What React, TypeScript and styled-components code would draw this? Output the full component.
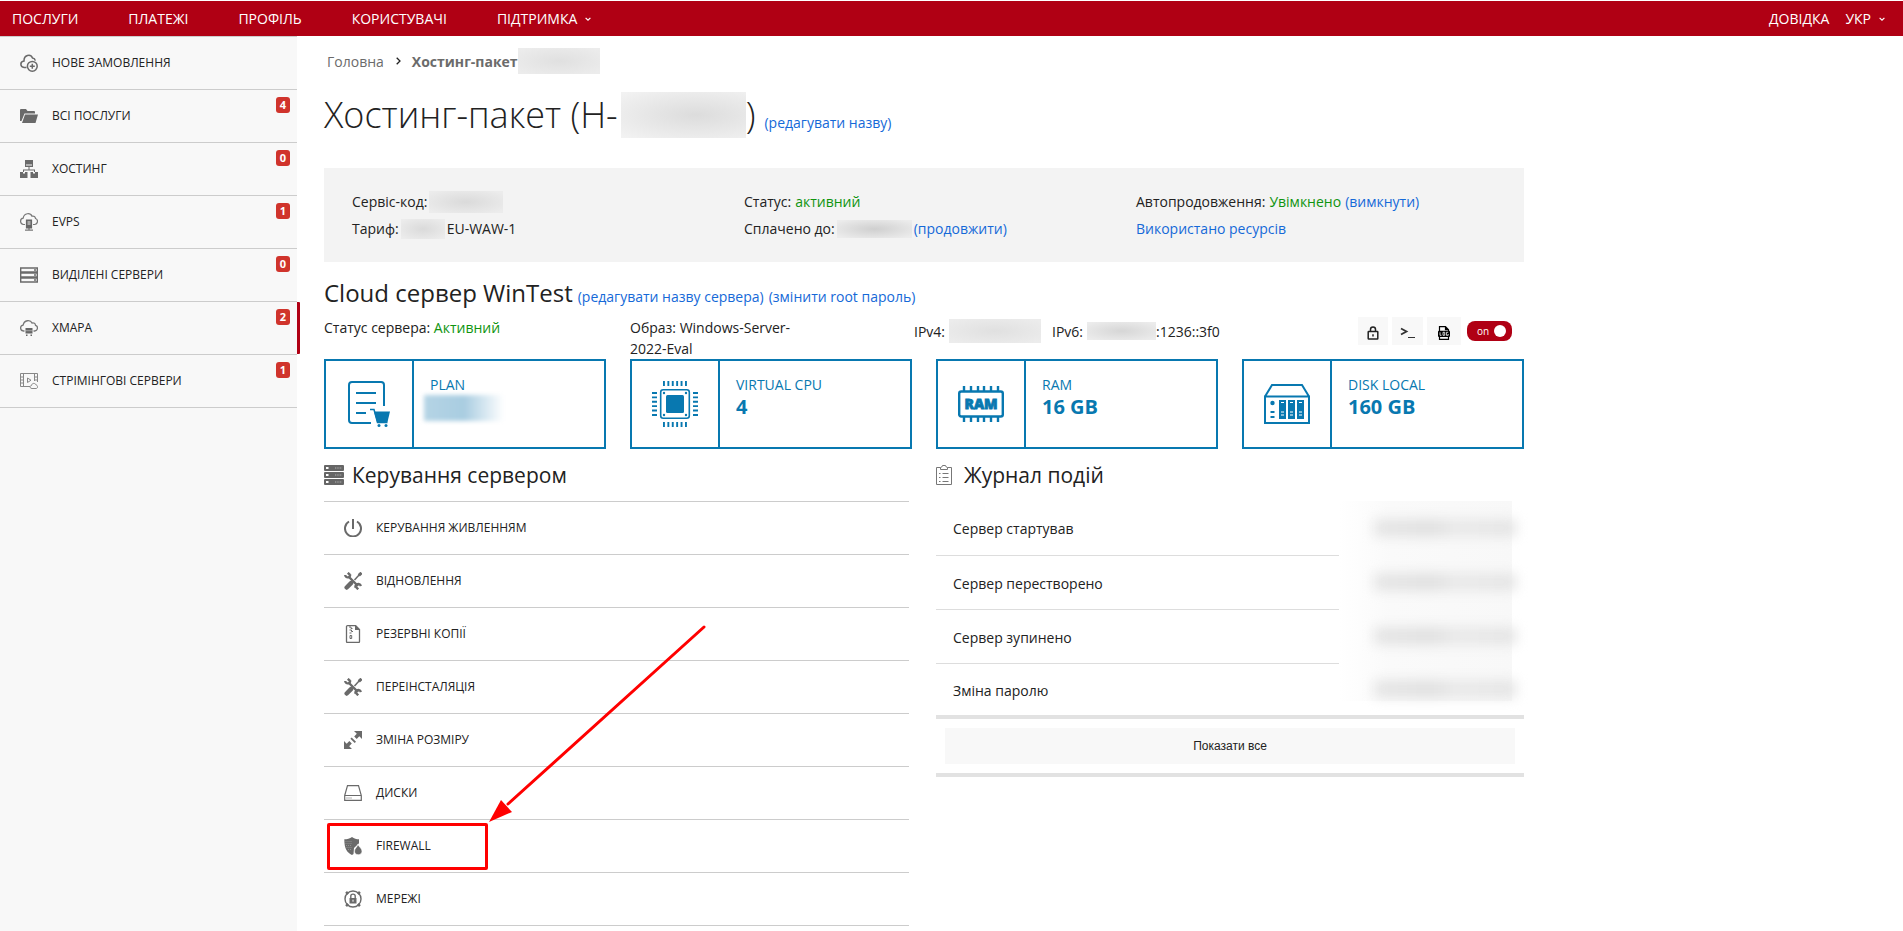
import React from "react";
import styled, { createGlobalStyle } from "styled-components";

const GlobalStyle = createGlobalStyle`
  * { box-sizing: border-box; }
  body {
    margin: 0;
    background: #fff;
    color: #222;
    font-family: "Open Sans", "Noto Sans", sans-serif;
    font-size: 14px;
    line-height: 21px;
  }
  a { text-decoration: none; }
  svg { display: block; flex: none; }
`;

const Page = styled.div`
  min-height: 100vh;
  display: flex;
  flex-direction: column;
  overflow: hidden;
`;

const TopBar = styled.header`
  display: flex;
  justify-content: space-between;
  align-items: center;
  height: 35px;
  margin-top: 1px;
  padding: 0 18px 0 12px;
  background: #b00014;
`;

const TopNav = styled.nav<{ $gap: number }>`
  display: flex;
  gap: ${(p) => p.$gap}px;
`;

const TopLink = styled.a`
  color: #fff;
  white-space: nowrap;
`;

const TopMenu = styled.button`
  display: flex;
  align-items: center;
  gap: 8px;
  padding: 0;
  border: 0;
  background: none;
  color: #fff;
  font: inherit;
`;

const Body = styled.div`
  flex: 1;
  display: flex;
`;

const Sidebar = styled.nav`
  flex: none;
  width: 297px;
  background: #f8f8f8;
  border-top: 1px solid #ccc;
`;

const List = styled.ul`
  list-style: none;
  margin: 0;
  padding: 0;
`;

const SideItem = styled.li<{ $active?: boolean }>`
  position: relative;
  border-bottom: 1px solid #ccc;
  ${(p) =>
    p.$active &&
    `&::after {
      content: "";
      position: absolute;
      top: 0;
      right: -3px;
      bottom: 0;
      width: 3px;
      border-radius: 0 1px 1px 0;
      background: #b00014;
    }`}
`;

const MenuLink = styled.a<{ $gap: number }>`
  display: flex;
  align-items: center;
  gap: ${(p) => p.$gap}px;
  height: 52px;
  padding: 0 20px;
  color: #222;
  font-size: 12px;
  white-space: nowrap;
`;

const MenuLabel = styled.span`
  padding-bottom: 2px;
`;

const Badge = styled.span`
  position: absolute;
  top: 7px;
  right: 7px;
  width: 14px;
  height: 16px;
  border-radius: 3px;
  background: #d0342c;
  color: #fff;
  font-size: 11px;
  font-weight: 700;
  line-height: 16px;
  text-align: center;
`;

const Main = styled.main`
  flex: 1;
  min-width: 0;
  max-width: 1254px;
  padding: 14px 27px 5px;
`;

const Breadcrumb = styled.nav`
  display: flex;
  align-items: center;
  height: 22px;
  padding-left: 3px;
`;

const Crumb = styled.a`
  margin-right: 12px;
  color: #6b6b6b;
`;

const CurrentCrumb = styled.b`
  margin-left: 11px;
  color: #6b6b6b;
`;

const Redacted = styled.span<{ $w: number; $h: number; $tone?: string }>`
  flex: none;
  display: inline-block;
  vertical-align: middle;
  width: ${(p) => p.$w}px;
  height: ${(p) => p.$h}px;
  background: radial-gradient(ellipse, ${(p) => p.$tone ?? "#dadada"}, #ececec 90%);
`;

const Title = styled.h1`
  display: flex;
  align-items: baseline;
  height: 50px;
  margin: 18px 0 28px;
  font-size: 36px;
  font-weight: 300;
  line-height: 50px;
  white-space: nowrap;

  ${Redacted} {
    align-self: center;
    margin-left: 3px;
    background: radial-gradient(ellipse at 60% 50%, #dcdcdc, #f2f2f2 95%);
  }
`;

const Link = styled.a`
  color: #1569d8;
  font-size: 14px;
  font-weight: 400;
`;

const TitleLink = styled(Link)`
  margin-left: 9px;
`;

const Good = styled.span`
  color: #0f940f;
`;

const InfoBox = styled.section`
  display: grid;
  grid-template-columns: 392fr 392fr 388fr;
  padding: 20px 0 20px 28px;
  background: #f3f3f3;
  line-height: 27px;
`;

const InfoLine = styled.div`
  display: flex;
  align-items: center;
  gap: 4px;
  height: 27px;
`;

const TightLine = styled(InfoLine)`
  gap: 2px;
`;

const ServerName = styled.h2`
  display: flex;
  align-items: baseline;
  gap: 5px;
  height: 34px;
  margin: 14px 0 7px;
  font-size: 24px;
  font-weight: 400;
  line-height: 34px;
`;

const StatusRow = styled.section`
  display: flex;
  align-items: flex-start;
`;

const StatusCell = styled.div<{ $w: number; $end?: number }>`
  width: ${(p) => p.$w}px;
  padding-right: ${(p) => p.$end ?? 0}px;
`;

const IpCell = styled.div`
  flex: 1;
  display: flex;
  align-items: center;
  height: 28px;
`;

const IpLabel = styled.span`
  margin-right: 4px;
`;

const IpSecond = styled(IpLabel)`
  margin-left: 11px;
`;

const Tools = styled.div`
  display: flex;
  align-items: center;
  gap: 4px;
  padding-right: 12px;
`;

const ToolButton = styled.button<{ $w: number }>`
  display: flex;
  align-items: center;
  justify-content: center;
  width: ${(p) => p.$w}px;
  height: 28px;
  padding: 4px 0 0;
  border: 0;
  background: #f8f8f8;
  color: #111;
`;

const Toggle = styled.label`
  display: flex;
  align-items: center;
  justify-content: space-between;
  width: 45px;
  height: 20px;
  margin-left: 2px;
  padding: 0 6px 0 10px;
  border-radius: 8px;
  background: #b00014;
  color: #fff;
  font-size: 10px;
`;

const ToggleInput = styled.input`
  appearance: none;
  width: 12px;
  height: 12px;
  margin: 0;
  border-radius: 50%;
  background: #fff;
`;

const Cards = styled.section`
  display: grid;
  grid-template-columns: repeat(4, 1fr);
  gap: 24px;
`;

const Card = styled.div`
  display: flex;
  height: 90px;
  border: 2px solid #0878b0;
  color: #0878b0;
`;

const CardIcon = styled.div`
  display: flex;
  align-items: center;
  justify-content: center;
  width: 88px;
  border-right: 2px solid #0878b0;
`;

const CardText = styled.div`
  padding: 13px 16px;
`;

const CardValue = styled.div`
  font-size: 20px;
  font-weight: 700;
  line-height: 24px;
`;

const PlanSmudge = styled.div`
  width: 80px;
  height: 26px;
  margin-left: -6px;
  background: linear-gradient(90deg, #b5d4e5, #a9cde1 50%, #fff);
  filter: blur(2px);
`;

const Columns = styled.div`
  display: grid;
  grid-template-columns: 585fr 588fr;
  gap: 27px;
  align-items: start;
  margin-top: 11px;
`;

const SectionTitle = styled.h2<{ $gap: number }>`
  display: flex;
  align-items: center;
  gap: ${(p) => p.$gap}px;
  height: 30px;
  margin: 0 0 11px;
  font-size: 21px;
  font-weight: 400;
  line-height: 30px;
`;

const ManageList = styled(List)`
  border-top: 1px solid #ccc;
`;

const ManageItem = styled.li`
  position: relative;
  border-bottom: 1px solid #ccc;
`;

const Highlight = styled.div`
  position: absolute;
  top: 3px;
  left: 3px;
  width: 161px;
  height: 47px;
  border: 3px solid #f00;
  border-radius: 2px;
`;

const Arrow = styled.svg`
  position: absolute;
  left: 160px;
  bottom: 49px;
  pointer-events: none;
`;

const LogTable = styled.table`
  width: 100%;
  border-collapse: collapse;
  border-bottom: 4px solid #e2e2e2;
`;

const LogCell = styled.td`
  height: 54px;
  padding: 2px 17px 0;
  border-bottom: 1px solid #ddd;

  tr:last-child & { border-bottom: 0; }
`;

const DateCell = styled.td`
  width: 185px;
  padding: 0 8px 0 0;
  background: linear-gradient(90deg, #fff, #fafafa 30%, #f8f8f8) no-repeat 0 0 / 173px 100%;

  tr:last-child & { background-size: 173px 38px; }
`;

const DateSmudge = styled.div`
  width: 142px;
  height: 18px;
  margin-left: auto;
  background: linear-gradient(90deg, #e6e6e6, #e0e0e0 40%, #e9e9e9 58%, #e5e5e5);
  filter: blur(6px);
`;

const ShowAllBar = styled.div`
  padding: 9px;
  border-bottom: 4px solid #e2e2e2;
`;

const ShowAll = styled.button`
  display: block;
  width: 100%;
  height: 36px;
  border: 0;
  background: #f8f8f8;
  color: #222;
  font-family: "Liberation Sans", Arial, sans-serif;
  font-size: 12px;
`;

const Chevron = ({ color = "#fff" }: { color?: string }) => (
  <svg width="6" height="6" viewBox="0 0 6 6" fill="none" stroke={color} strokeWidth="1.2">
    <path d="M.6 1.8 3 4.2 5.4 1.8" />
  </svg>
);

const icons: Record<string, React.ReactNode> = {
  order: (
    <g fill="none" stroke="#6a6a6a" strokeWidth="1.5">
      <path d="M6.500 13.500H4.200C-.2 13-.2 7.400 4 7 3.800 1 10.500-.8 12.500 4c1.500.2 2.500 1 2.800 2.600" />
      <circle cx="12.300" cy="12.300" r="4.900" />
      <path d="M12.300 9.800v5M9.800 12.300h5" />
    </g>
  ),
  folder: (
    <path fill="#6a6a6a" d="M0 3q0-1 1-1h5l1.500 2H14q1 0 1 1v1.500H4.500L1.500 14H0zM5 7.500h13L15.500 16H2z" />
  ),
  hosting: (
    <g fill="#6a6a6a">
      <path d="M5 0h8v7H5zM0 12h7.500v6H0zM10.500 12H18v6h-7.500z" />
      <path d="M8.500 7h1v2.500H15V12h-1v-1.500H4V12H3V9.500h5.500z" />
      <path fill="#f8f8f8" d="M6 4.500h6v1H6zM3 12h2v1.500H3zM13 12h2v1.500h-2z" />
    </g>
  ),
  evps: (
    <g fill="none" stroke="#777" strokeWidth="1.200">
      <path d="M5 11.500H3.500C-.5 11-.2 5.500 3.200 5.200 4-.5 10.500-.3 12 3.200c2-.5 3.300.5 3.500 2.300 3 1 2.500 5.500-.7 6H13" />
      <path d="M9 15v2.500M5 17.200h8" />
      <path fill="#666" stroke="#666" d="M6.500 7h5v8h-5z" />
      <path stroke="#eee" d="M7.500 9h3M7.500 11h3" />
    </g>
  ),
  dedicated: (
    <g fill="none" stroke="#6a6a6a" strokeWidth="1.400">
      <path d="M.7 2h16.600v4H.7zM.7 7h16.600v4H.7zM.7 12h16.600v4H.7z" />
      <path d="M14 4h2M14 9h2M14 14h2" />
    </g>
  ),
  cloud: (
    <g fill="none" stroke="#777" strokeWidth="1.300">
      <path d="M4.500 12H3.500C-.5 11.500-.2 6.500 3.200 6 4 .8 10.500.5 12 4c2-.5 3.300.5 3.500 2.300 3 1 2.500 5.300-.7 5.700h-1.300" />
      <path fill="#666" stroke="none" d="M5.500 9h7v5.500h-7zM6 15.500h1.500V17H6zM10.500 15.500H12V17h-1.500z" />
      <path stroke="#ccc" strokeWidth=".6" d="M5.500 11.700h7" />
    </g>
  ),
  stream: (
    <g fill="none" stroke="#888">
      <path d="M10 14.500H.5v-13h17V10M3.500 1.500v13M14.500 1.500V9M.5 5h3M.5 8h3M.5 11h3M14.500 5h3M14.500 8h3M7.500 6v4.500L11 8.200z" />
      <path fill="#f8f8f8" d="M12 16.500c-2.500 0-2.500-3-.5-3 .5-3 4-2.500 4.500-.5 2 0 2.200 3.500 0 3.500z" />
    </g>
  ),
  power: (
    <path fill="none" stroke="#6a6a6a" strokeWidth="2" d="M9 0v10M5 2.500a8 8 0 1 0 8 0" />
  ),
  tools: (
    <g fill="none" stroke="#6a6a6a">
      <path strokeWidth="2.400" d="M5 5l9 9" />
      <path strokeWidth="2.400" d="M1.200 3C1.500 6.500 6.800 6 6 2.500M6 2.800 3.800.8M11.500 15.500C11 12 15.500 10.500 17 14M12 15l2.200 2.300" />
      <path strokeWidth="1.500" d="M15.500 2.500 10.500 8" />
      <path strokeWidth="3" d="M17.500.8 14.800 3.400" />
      <path strokeWidth="4.500" strokeLinecap="round" d="M7 11.200 2.700 15.500" />
    </g>
  ),
  backup: (
    <g fill="none" stroke="#6a6a6a" strokeWidth="1.300">
      <path d="M3.500.7h8.200l3.800 3.800v12q0 1-1 1h-11q-1 0-1-1v-15q0-.8 1-.8z" />
      <path fill="#6a6a6a" stroke="none" d="M11 0l5 5h-5z" />
      <path strokeWidth="1" d="M5 2h2v1.500h1.500M5.500 5h2v1.500H9M5.500 8h2" />
      <path d="M6 10.500h1.700v3H6z" strokeWidth="1" />
    </g>
  ),
  resize: (
    <g fill="#6a6a6a">
      <path d="M18 0v8l-2.700-2.700-2.600 2.600L10.200 5.400l2.600-2.600L10 0zM0 18v-8l2.700 2.700 2.600-2.600 2.500 2.500-2.600 2.600L8 18z" />
      <path d="M7.700 6.500 12 10.800l-1.300 1.300L6.400 7.800z" />
    </g>
  ),
  disk: (
    <g fill="none" stroke="#6a6a6a" strokeWidth="1.200">
      <path d="M.7 11.500 3.500 1.700h11l2.800 9.800v4.800H.7zM.7 11.500h16.600" />
      <path strokeDasharray="1 1" d="M2.500 14h6" />
    </g>
  ),
  firewall: (
    <g fill="#6a6a6a">
      <path d="M8 0c2 1.700 4.500 2.300 7 2.300v4L10 11l-.5 6-1.500 1C3 15.500.3 12 .3 2.300 3 2.300 6 1.700 8 0z" />
      <path stroke="#fff" strokeWidth=".6" d="M14 7c.5 3 4 4 4 7.200 0 4.700-7.500 4.700-7.500 0C10.500 11.500 13.500 10 14 7z" />
      <path stroke="#aaa" strokeWidth=".6" strokeDasharray="1 1" d="M1.500 4.500H8M1.500 6.500H8M2 8.500h6M2.500 10.500H8M4 12.500h4" />
    </g>
  ),
  network: (
    <g fill="none" stroke="#6a6a6a" strokeWidth="1.400">
      <circle cx="9" cy="9" r="8" />
      <path strokeWidth="3" d="M2.200 3.800 4 2.200M14 2.200l1.800 1.600M2.200 14.200 4 15.800M14 15.800l1.800-1.600" />
      <path d="M6.800 8V6c0-2.500 4.400-2.500 4.400 0v2" />
      <path fill="#6a6a6a" stroke="none" d="M5.500 8h7v5.500h-7z" />
      <path stroke="#fff" strokeWidth="1" d="M9 9.700v2" />
    </g>
  ),
};

const Icon = ({ name }: { name: string }) => (
  <svg width="18" height="18" viewBox="0 0 18 18" aria-hidden="true">
    {icons[name]}
  </svg>
);

const PlanIcon = () => (
  <svg width="42" height="46" viewBox="0 0 42 46" fill="none" stroke="#0878b0" strokeWidth="2">
    <path d="M23 42H4q-3 0-3-3V4q0-3 3-3h29q3 0 3 3v21M8 12h20M8 22h20M8 32h10" />
    <path fill="#0878b0" stroke="none" d="M26 30.500h16L39.500 41H29z" />
    <path strokeWidth="1.500" d="M22 28.500h4L29.500 41.500h10" />
    <circle cx="31" cy="44.500" r="1.500" fill="#0878b0" stroke="none" />
    <circle cx="38" cy="44.500" r="1.500" fill="#0878b0" stroke="none" />
  </svg>
);

const CpuIcon = () => (
  <svg width="46" height="46" viewBox="0 0 46 46" fill="none" stroke="#0878b0">
    <rect x="8.700" y="8.700" width="28.600" height="28.600" rx="2.500" strokeWidth="1.600" />
    <rect x="14" y="14" width="18" height="18" rx="1.500" fill="#0878b0" stroke="none" />
    <path
      strokeWidth="5"
      strokeDasharray="1.900 2.500"
      d="M11 2.500h24M11 43.500h24M2.500 11v24M43.500 11v24"
    />
    <g fill="#0878b0" stroke="none">
      <circle cx="12" cy="12" r="1.200" />
      <circle cx="34" cy="12" r="1.200" />
      <circle cx="12" cy="34" r="1.200" />
      <circle cx="34" cy="34" r="1.200" />
    </g>
  </svg>
);

const RamIcon = () => (
  <svg width="46" height="38" viewBox="0 0 46 38" fill="none" stroke="#0878b0" strokeWidth="2.400">
    <rect x="1.200" y="6.500" width="43.600" height="25" rx="2" />
    <path d="M6 1v5M13 1v5M20 1v5M26 1v5M33 1v5M40 1v5M6 32v5M13 32v5M20 32v5M26 32v5M33 32v5M40 32v5" />
    <text
      x="23"
      y="24"
      fill="#0878b0"
      stroke="#0878b0"
      strokeWidth=".8"
      fontFamily="Open Sans, sans-serif"
      fontSize="14"
      fontWeight="800"
      textAnchor="middle"
    >
      RAM
    </text>
  </svg>
);

const DiskIcon = () => (
  <svg width="46" height="40" viewBox="0 0 46 40" fill="none" stroke="#0878b0" strokeWidth="2">
    <path d="M1 12.500h44V39H1zM1 12.500 8 1h30l7 11.500" />
    <path fill="#0878b0" stroke="none" d="M15 16h7v19h-7zM24 16h7v19h-7zM33 16h7v19h-7z" />
    <path stroke="#fff" strokeWidth="1" d="M17 18.500h3M26 18.500h3M35 18.500h3M17 28h3M26 28h3M35 28h3M17 31h3M26 31h3M35 31h3" />
    <path d="M6.500 28h4M6.500 33h4" />
    <circle cx="8.500" cy="19" r="2.200" fill="#0878b0" stroke="none" />
  </svg>
);

const RackIcon = () => (
  <svg width="20" height="20" viewBox="0 0 20 20" fill="#666">
    <rect width="20" height="6" rx="1" />
    <rect y="7" width="20" height="6" rx="1" />
    <rect y="14" width="20" height="6" rx="1" />
    <path fill="#fff" d="M2 2h2.500v2H2zM2 9h2.500v2H2zM2 16h2.500v2H2z" />
    <path stroke="#999" strokeWidth="1.500" strokeDasharray="1 .7" d="M11 3h7M11 10h7M11 17h7" />
  </svg>
);

const ClipboardIcon = () => (
  <svg width="16" height="20" viewBox="0 0 16 20" fill="none" stroke="#777">
    <path d="M4.500 2.500h-4v17h15v-17h-4M4.500 4.500v-2q1.500 0 2-2h3q.5 2 2 2v2z" />
    <path d="M6.500 8.500h6M6.500 12.500h6M6.500 16.500h6M3 8.500h1.500M3 12.500h1.500M3 16.500h1.500" />
  </svg>
);

const LockIcon = () => (
  <svg width="12" height="14" viewBox="0 0 12 14" fill="none" stroke="#222" strokeWidth="1.500">
    <rect x="1.200" y="5.500" width="9.600" height="7.500" rx=".5" />
    <path d="M3.500 5.500V3.500c0-3.400 5-3.400 5 0v2M6 8.200v2.300" />
  </svg>
);

const ConsoleIcon = () => (
  <svg width="16" height="12" viewBox="0 0 16 12" fill="none" stroke="#333">
    <path strokeWidth="1.800" d="M1 1.500 6.500 4.500 1 7.500" />
    <path d="M8 10.500h7" />
  </svg>
);

const LogIcon = () => (
  <svg width="12" height="14" viewBox="0 0 12 14" fill="none" stroke="#000" strokeWidth="1.200">
    <path d="M1.500 5V.7h6l3 3V5M1.500 11v2.300h9V11M7.500.7v3h3" />
    <rect y="4.800" width="12" height="6.200" rx="1" fill="#000" stroke="none" />
    <path stroke="#fff" strokeWidth=".8" d="M2 6.300v3h1.500M5 6.300h1.700v3H5zM10.200 6.300H8.400v3h1.800V8" />
  </svg>
);

const services = [
  { icon: "order", label: "НОВЕ ЗАМОВЛЕННЯ" },
  { icon: "folder", label: "ВСІ ПОСЛУГИ", count: 4 },
  { icon: "hosting", label: "ХОСТИНГ", count: 0 },
  { icon: "evps", label: "EVPS", count: 1 },
  { icon: "dedicated", label: "ВИДІЛЕНІ СЕРВЕРИ", count: 0 },
  { icon: "cloud", label: "ХМАРА", count: 2, active: true },
  { icon: "stream", label: "СТРІМІНГОВІ СЕРВЕРИ", count: 1 },
];

const actions = [
  { icon: "power", label: "КЕРУВАННЯ ЖИВЛЕННЯМ" },
  { icon: "tools", label: "ВІДНОВЛЕННЯ" },
  { icon: "backup", label: "РЕЗЕРВНІ КОПІЇ" },
  { icon: "tools", label: "ПЕРЕІНСТАЛЯЦІЯ" },
  { icon: "resize", label: "ЗМІНА РОЗМІРУ" },
  { icon: "disk", label: "ДИСКИ" },
  { icon: "firewall", label: "FIREWALL", marked: true },
  { icon: "network", label: "МЕРЕЖІ" },
];

const events = ["Сервер стартував", "Сервер перестворено", "Сервер зупинено", "Зміна паролю"];

const specs = [
  { icon: <PlanIcon />, label: "PLAN", value: null },
  { icon: <CpuIcon />, label: "VIRTUAL CPU", value: "4" },
  { icon: <RamIcon />, label: "RAM", value: "16 GB" },
  { icon: <DiskIcon />, label: "DISK LOCAL", value: "160 GB" },
];

export default function App() {
  return (
    <Page>
      <GlobalStyle />
      <TopBar>
        <TopNav $gap={50}>
          <TopLink href="#services">ПОСЛУГИ</TopLink>
          <TopLink href="#payments">ПЛАТЕЖІ</TopLink>
          <TopLink href="#profile">ПРОФІЛЬ</TopLink>
          <TopLink href="#users">КОРИСТУВАЧІ</TopLink>
          <TopMenu type="button">
            ПІДТРИМКА <Chevron />
          </TopMenu>
        </TopNav>
        <TopNav $gap={16}>
          <TopLink href="#help">ДОВІДКА</TopLink>
          <TopMenu type="button">
            УКР <Chevron />
          </TopMenu>
        </TopNav>
      </TopBar>
      <Body>
        <Sidebar>
          <List>
            {services.map((s) => (
              <SideItem key={s.label} $active={s.active}>
                <MenuLink href={`#${s.icon}`} $gap={14}>
                  <Icon name={s.icon} />
                  <MenuLabel>{s.label}</MenuLabel>
                </MenuLink>
                {s.count !== undefined && <Badge>{s.count}</Badge>}
              </SideItem>
            ))}
          </List>
        </Sidebar>
        <Main>
          <Breadcrumb>
            <Crumb href="#home">Головна</Crumb>
            <svg width="5" height="8" viewBox="0 0 5 8" fill="none" stroke="#222" strokeWidth="1.300">
              <path d="M.7.7 4 4 .7 7.300" />
            </svg>
            <CurrentCrumb>Хостинг-пакет</CurrentCrumb>
            <Redacted $w={82} $h={26} $tone="#e0e0e0" />
          </Breadcrumb>
          <Title>
            Хостинг-пакет (H-
            <Redacted $w={125} $h={46} />)
            <TitleLink href="#rename">(редагувати назву)</TitleLink>
          </Title>
          <InfoBox>
            <div>
              <TightLine>
                Сервіс-код: <Redacted $w={74} $h={22} />
              </TightLine>
              <TightLine>
                Тариф: <Redacted $w={44} $h={20} /> EU-WAW-1
              </TightLine>
            </div>
            <div>
              <InfoLine>
                Статус: <Good>активний</Good>
              </InfoLine>
              <TightLine>
                Сплачено до: <Redacted $w={75} $h={18} $tone="#cfcfcf" />
                <Link href="#prolong">(продовжити)</Link>
              </TightLine>
            </div>
            <div>
              <InfoLine>
                Автопродовження: <Good>Увімкнено</Good> <Link href="#disable">(вимкнути)</Link>
              </InfoLine>
              <InfoLine>
                <Link href="#usage">Використано ресурсів</Link>
              </InfoLine>
            </div>
          </InfoBox>
          <ServerName>
            Cloud сервер WinTest
            <Link href="#rename-server">(редагувати назву сервера)</Link>
            <Link href="#root">(змінити root пароль)</Link>
          </ServerName>
          <StatusRow>
            <StatusCell $w={306}>
              Статус сервера: <Good>Активний</Good>
            </StatusCell>
            <StatusCell $w={284} $end={110}>
              Образ: Windows-Server-2022-Eval
            </StatusCell>
            <IpCell>
              <IpLabel>IPv4:</IpLabel>
              <Redacted $w={92} $h={24} $tone="#e0e0e0" />
              <IpSecond>IPv6:</IpSecond>
              <Redacted $w={69} $h={18} $tone="#d6d6d6" />
              :1236::3f0
            </IpCell>
            <Tools>
              <ToolButton type="button" $w={30} aria-label="Блокування">
                <LockIcon />
              </ToolButton>
              <ToolButton type="button" $w={31} aria-label="Консоль">
                <ConsoleIcon />
              </ToolButton>
              <ToolButton type="button" $w={34} aria-label="Журнал">
                <LogIcon />
              </ToolButton>
              <Toggle>
                on
                <ToggleInput type="checkbox" defaultChecked />
              </Toggle>
            </Tools>
          </StatusRow>
          <Cards>
            {specs.map((s) => (
              <Card key={s.label}>
                <CardIcon>{s.icon}</CardIcon>
                <CardText>
                  {s.label}
                  {s.value ? <CardValue>{s.value}</CardValue> : <PlanSmudge />}
                </CardText>
              </Card>
            ))}
          </Cards>
          <Columns>
            <section>
              <SectionTitle $gap={8}>
                <RackIcon />
                Керування сервером
              </SectionTitle>
              <ManageList>
                {actions.map((a) => (
                  <ManageItem key={a.label}>
                    <MenuLink href={`#${a.icon}`} $gap={14}>
                      <Icon name={a.icon} />
                      <MenuLabel>{a.label}</MenuLabel>
                    </MenuLink>
                    {a.marked && (
                      <>
                        <Highlight />
                        <Arrow width="226" height="202" viewBox="0 0 226 202">
                          <path d="M220 6 24 183" stroke="#f00" strokeWidth="3" strokeLinecap="round" />
                          <path d="M5 201 17 179 28 191z" fill="#f00" />
                        </Arrow>
                      </>
                    )}
                  </ManageItem>
                ))}
              </ManageList>
            </section>
            <section>
              <SectionTitle $gap={12}>
                <ClipboardIcon />
                Журнал подій
              </SectionTitle>
              <LogTable>
                <tbody>
                  {events.map((e) => (
                    <tr key={e}>
                      <LogCell>{e}</LogCell>
                      <DateCell>
                        <DateSmudge />
                      </DateCell>
                    </tr>
                  ))}
                </tbody>
              </LogTable>
              <ShowAllBar>
                <ShowAll type="button">Показати все</ShowAll>
              </ShowAllBar>
            </section>
          </Columns>
        </Main>
      </Body>
    </Page>
  );
}
